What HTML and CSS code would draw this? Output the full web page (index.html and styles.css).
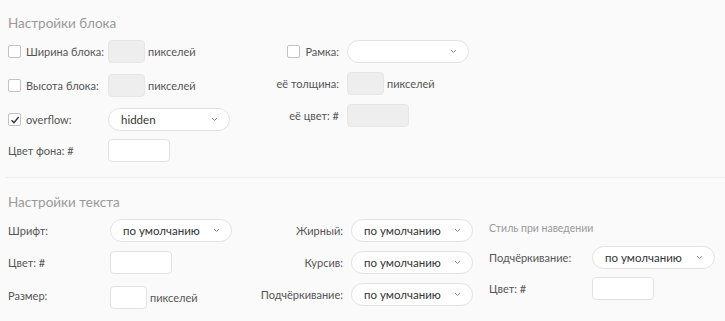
FILE: index.html
```html
<!DOCTYPE html>
<html lang="ru">
<head>
    <meta charset="utf-8" />
    <title>Настройки блока</title>
    <link rel="stylesheet" href="styles.css">
</head>
<body>
    <div id="wrapper">
        <div class="section">
            <h2 class="title">Настройки блока</h2>
            <div class="cols">
                <div class="col col-block">
                    <label class="lbl"><span class="box"></span>Ширина блока:</label>
                    <div class="ctl"><span class="field gray small"></span><span class="unit">пикселей</span></div>

                    <label class="lbl"><span class="box"></span>Высота блока:</label>
                    <div class="ctl"><span class="field gray small"></span><span class="unit">пикселей</span></div>

                    <label class="lbl tight"><span class="box checked"><svg width="10" height="10" viewBox="0 0 10 10"><path d="M1.5 5.2 L4 7.6 L8.6 2" fill="none" stroke="#333" stroke-width="1.4"/></svg></span>overflow:</label>
                    <div class="ctl tight"><div class="select"><span>hidden</span><svg width="7" height="5" viewBox="0 0 7 5"><path d="M1 1 L3.5 3.5 L6 1" fill="none" stroke="#888" stroke-width="1"/></svg></div></div>

                    <label class="lbl">Цвет фона: #</label>
                    <div class="ctl"><span class="field white mid"></span></div>
                </div>

                <div class="col col-border">
                    <label class="lbl right"><span class="box"></span>Рамка:</label>
                    <div class="ctl"><div class="select"><span></span><svg width="7" height="5" viewBox="0 0 7 5"><path d="M1 1 L3.5 3.5 L6 1" fill="none" stroke="#888" stroke-width="1"/></svg></div></div>

                    <label class="lbl right">её толщина:</label>
                    <div class="ctl"><span class="field gray small"></span><span class="unit">пикселей</span></div>

                    <label class="lbl right">её цвет: #</label>
                    <div class="ctl"><span class="field gray mid"></span></div>
                </div>
            </div>
        </div>

        <hr class="divider">

        <div class="section">
            <h2 class="title">Настройки текста</h2>
            <div class="cols">
                <div class="col col-font">
                    <label class="lbl">Шрифт:</label>
                    <div class="ctl"><div class="select"><span>по умолчанию</span><svg width="7" height="5" viewBox="0 0 7 5"><path d="M1 1 L3.5 3.5 L6 1" fill="none" stroke="#888" stroke-width="1"/></svg></div></div>

                    <label class="lbl">Цвет: #</label>
                    <div class="ctl"><span class="field white mid"></span></div>

                    <label class="lbl">Размер:</label>
                    <div class="ctl"><span class="field white small"></span><span class="unit">пикселей</span></div>
                </div>

                <div class="col col-style">
                    <label class="lbl right">Жирный:</label>
                    <div class="ctl"><div class="select"><span>по умолчанию</span><svg width="7" height="5" viewBox="0 0 7 5"><path d="M1 1 L3.5 3.5 L6 1" fill="none" stroke="#888" stroke-width="1"/></svg></div></div>

                    <label class="lbl right">Курсив:</label>
                    <div class="ctl"><div class="select"><span>по умолчанию</span><svg width="7" height="5" viewBox="0 0 7 5"><path d="M1 1 L3.5 3.5 L6 1" fill="none" stroke="#888" stroke-width="1"/></svg></div></div>

                    <label class="lbl right">Подчёркивание:</label>
                    <div class="ctl"><div class="select"><span>по умолчанию</span><svg width="7" height="5" viewBox="0 0 7 5"><path d="M1 1 L3.5 3.5 L6 1" fill="none" stroke="#888" stroke-width="1"/></svg></div></div>
                </div>

                <div class="col col-hover">
                    <p class="subtitle">Стиль при наведении</p>
                    <label class="lbl">Подчёркивание:</label>
                    <div class="ctl"><div class="select wide"><span>по умолчанию</span><svg width="7" height="5" viewBox="0 0 7 5"><path d="M1 1 L3.5 3.5 L6 1" fill="none" stroke="#888" stroke-width="1"/></svg></div></div>

                    <label class="lbl">Цвет: #</label>
                    <div class="ctl"><span class="field white mid"></span></div>
                </div>
            </div>
        </div>
    </div>
</body>
</html>
```

FILE: styles.css
```css
* {
    margin: 0;
    padding: 0;
    box-sizing: border-box;
}

body {
    background: #fafafa;
    font-family: "Lato", "Open Sans", sans-serif;
    font-size: 11px;
    color: #555;
}

#wrapper {
    padding: 0 0 0 5px;
}

.section {
    padding-left: 3px;
}

.title {
    font-size: 13.5px;
    font-weight: 400;
    line-height: 20px;
    color: #999;
}

.section:first-child .title {
    margin: 13px 0 7px;
}

.divider + .section .title {
    margin: 14px 0 7px;
}

.cols {
    display: flex;
}

.col {
    display: grid;
    align-items: center;
    align-content: start;
}

.col-block {
    width: 262px;
    grid-template-columns: 100px auto;
    row-gap: 11px;
}

.col-block .tight {
    margin-bottom: -3px;
}

.col-border {
    grid-template-columns: 69px auto;
    column-gap: 8px;
    row-gap: 9px;
}

.col-font {
    width: 247px;
    grid-template-columns: 102px auto;
    row-gap: 9px;
}

.col-font .ctl:last-child {
    margin-top: 3px;
}

.col-style {
    width: 234px;
    grid-template-columns: 88px auto;
    column-gap: 8px;
    row-gap: 9px;
}

.col-hover {
    grid-template-columns: 103px auto;
    row-gap: 8px;
}

.subtitle {
    grid-column: 1 / 3;
    font-size: 10.5px;
    color: #999;
    line-height: 16px;
    margin-top: 1px;
    margin-bottom: 2px;
}

.lbl {
    display: flex;
    align-items: center;
    gap: 5px;
    white-space: nowrap;
    line-height: 16px;
}

.lbl.right {
    justify-content: flex-end;
}

.box {
    flex-shrink: 0;
    width: 13px;
    height: 13px;
    border: 1px solid #c2c2c2;
    border-radius: 2px;
    background: #fff;
    display: inline-flex;
    align-items: center;
    justify-content: center;
}

.ctl {
    display: flex;
    align-items: center;
    gap: 3px;
}

.field {
    display: inline-block;
    height: 23px;
    border-radius: 4px;
}

.field.gray {
    background: #eee;
    border: 1px solid #e6e6e6;
}

.field.white {
    background: #fff;
    border: 1px solid #e2e2e2;
}

.field.small {
    width: 37px;
}

.field.mid {
    width: 62px;
}

.unit {
    color: #555;
}

.select {
    width: 122px;
    height: 23px;
    border: 1px solid #e2e2e2;
    border-radius: 12px;
    background: #fff;
    display: flex;
    align-items: center;
    justify-content: space-between;
    padding: 0 11px 0 12px;
    color: #333;
    font-size: 11.5px;
}

.select.wide {
    width: 123px;
}

.divider {
    border: 0;
    border-top: 1px solid #efefef;
    margin-top: 15px;
}
```
